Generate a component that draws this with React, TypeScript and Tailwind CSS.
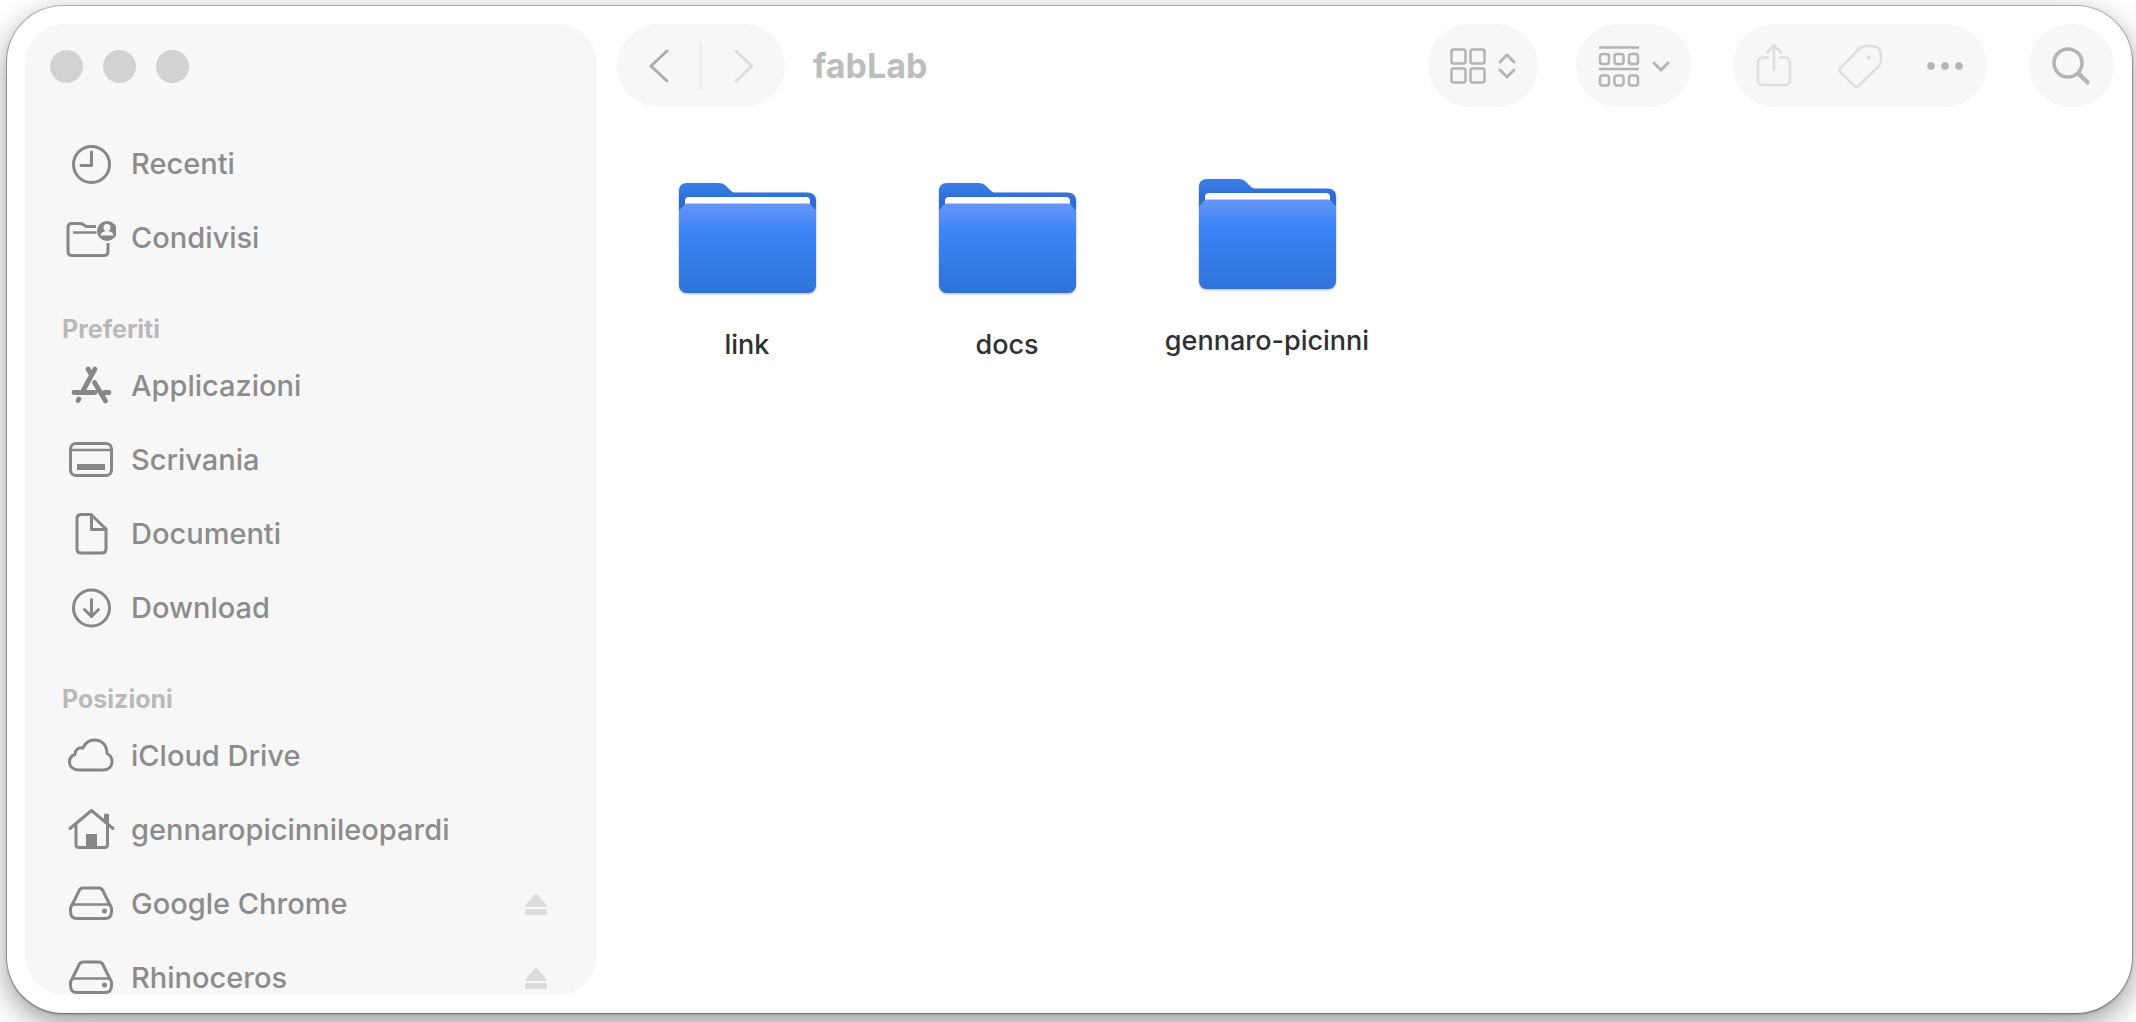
import React from "react";

const line = {
  fill: "none",
  stroke: "currentColor",
  strokeWidth: 3,
  strokeLinecap: "round" as const,
  strokeLinejoin: "round" as const,
};

function SideIcon({ children }: { children: React.ReactNode }) {
  return (
    <svg viewBox="0 0 50 48" className="h-12 w-[50px] shrink-0 text-[#878787]" aria-hidden="true" {...line}>
      {children}
    </svg>
  );
}

const ClockIcon = () => (
  <SideIcon>
    <circle cx="25.500" cy="24.500" r="18" />
    <path d="M25.500 12v13.500H15" />
  </SideIcon>
);

const SharedIcon = () => (
  <SideIcon>
    <path d="M30 12.500H20.500c-2 0-3-3-6-3H6C3.500 9.500 2 11 2 13.500v24c0 2.500 1.500 4 4 4h32c2.500 0 4-1.500 4-4V29" strokeLinecap="butt" />
    <path d="M7 18.500h23.500" strokeWidth="2.500" strokeLinecap="butt" />
    <circle cx="41" cy="17" r="10" fill="currentColor" stroke="none" />
    <circle cx="41" cy="13.500" r="3.500" fill="#f7f7f7" stroke="none" />
    <path d="M34.500 21.500c.5-3 2.500-4.500 6.500-4.500s6 1.500 6.500 4.500z" fill="#f7f7f7" stroke="none" />
  </SideIcon>
);

const AppsIcon = () => (
  <SideIcon>
    <g strokeWidth="4.800">
      <path d="M22 7l3 5M29 7L17.500 28M8 30.500h21M12 38.500l1-1.500M28.500 20.500l11 18.500M38.500 30.500h4.500" />
    </g>
  </SideIcon>
);

const DesktopIcon = () => (
  <SideIcon>
    <rect x="4.500" y="7.500" width="41" height="32" rx="5.500" />
    <path d="M4.500 14h41" strokeWidth="2.500" />
    <path d="M11 28h28v6H11z" fill="currentColor" stroke="none" />
  </SideIcon>
);

const DocumentIcon = () => (
  <SideIcon>
    <path d="M15.500 4.500h9.500L40 19v20c0 2.500-1.500 4-4 4H15c-2.500 0-4-1.500-4-4V8.500c0-2.500 1.500-4 4.500-4z" />
    <path d="M25.500 5v14.500H40" />
  </SideIcon>
);

const DownloadIcon = () => (
  <SideIcon>
    <circle cx="25.500" cy="24" r="18" />
    <path d="M25.500 15.500V32M18.500 25.500l7 7 7-7" />
  </SideIcon>
);

const CloudIcon = () => (
  <SideIcon>
    <path d="M12.500 38C7 38 3.500 34.500 3.500 30c0-4 2-6.500 5.500-7.500 0-4.500 3.500-7.500 8-6.500 2-4.500 6-8 11.500-8C36 8 41 13.500 41 21.500c3 1.500 5 4.500 5 8 0 5-3.500 8.500-9 8.500z" />
  </SideIcon>
);

const HouseIcon = () => (
  <SideIcon>
    <path d="M4 22.500L25.500 4.500 47 22.500M10 19v19.500c0 2 1 3 3 3h25.500c2 0 3-1 3-3V9M39.500 9v6" />
    <path d="M20 28h11v13.500H20z" fill="currentColor" stroke="none" />
  </SideIcon>
);

const DriveIcon = () => (
  <SideIcon>
    <path d="M12.500 12c.7-2.500 2-4 5-4h15c3 0 4.300 1.500 5 4l8 16v3.500c0 4.500-2.500 7-6.500 7H11c-4 0-6.500-2.500-6.500-7V28z" />
    <path d="M6 24.500h38" strokeWidth="2.500" />
    <circle cx="38.500" cy="31" r="2.500" fill="currentColor" stroke="none" />
  </SideIcon>
);

type Entry = { label: string; Icon: () => React.ReactElement; eject?: boolean };

const sections: { title?: string; entries: Entry[] }[] = [
  {
    entries: [
      { label: "Recenti", Icon: ClockIcon },
      { label: "Condivisi", Icon: SharedIcon },
    ],
  },
  {
    title: "Preferiti",
    entries: [
      { label: "Applicazioni", Icon: AppsIcon },
      { label: "Scrivania", Icon: DesktopIcon },
      { label: "Documenti", Icon: DocumentIcon },
      { label: "Download", Icon: DownloadIcon },
    ],
  },
  {
    title: "Posizioni",
    entries: [
      { label: "iCloud Drive", Icon: CloudIcon },
      { label: "gennaropicinnileopardi", Icon: HouseIcon },
      { label: "Google Chrome", Icon: DriveIcon, eject: true },
      { label: "Rhinoceros", Icon: DriveIcon, eject: true },
    ],
  },
];

function Sidebar() {
  return (
    <aside className="flex w-[572px] shrink-0 flex-col overflow-hidden rounded-[40px] bg-[#f7f7f7]">
      <div className="flex h-[103px] shrink-0 gap-5 px-[25px] pt-[26px]">
        {["Chiudi", "Riduci", "Ingrandisci"].map((name) => (
          <button key={name} aria-label={name} className="size-[33px] rounded-full bg-[#d2d2d2]" />
        ))}
      </div>
      <nav className="flex flex-col">
        {sections.map((section, i) => (
          <section key={i}>
            {section.title && (
              <h2 className="flex h-[74px] items-end pl-[37px] text-[25px] leading-10 font-bold text-[#b9b9b9]">
                {section.title}
              </h2>
            )}
            <ul>
              {section.entries.map(({ label, Icon, eject }) => (
                <li key={label} className="flex h-[74px] items-center justify-between pr-[50px] pl-[41px]">
                  <button className="flex items-center gap-[15px] text-[29px] leading-9 font-medium text-[#8c8c8c]">
                    <Icon />
                    {label}
                  </button>
                  {eject && (
                    <button aria-label={`Espelli ${label}`}>
                      <svg viewBox="0 0 22 22" className="size-[22px] text-[#dcdcdc]" fill="currentColor">
                        <path d="M10 1.200q1-1 2 0l9.500 11q.8 1.800-1 1.800H1.500q-1.800 0-1-1.800z" />
                        <rect y="16" width="22" height="6" rx="1" />
                      </svg>
                    </button>
                  )}
                </li>
              ))}
            </ul>
          </section>
        ))}
      </nav>
    </aside>
  );
}

const pill = "flex h-[83px] shrink-0 items-center justify-center rounded-full bg-[#f7f7f7]";

function Toolbar() {
  return (
    <header className="flex items-center text-[#b4b4b4]">
      <div className={pill + " w-[168px]"}>
        <button aria-label="Indietro" className="flex h-full flex-1 items-center justify-center text-[#adadad]">
          <svg viewBox="0 0 24 36" className="h-9 w-6" {...line}>
            <path d="M20 3L4 18l16 15" />
          </svg>
        </button>
        <span className="h-[46px] w-0.5 bg-[#ececec]" />
        <button aria-label="Avanti" className="flex h-full flex-1 items-center justify-center text-[#dddddd]">
          <svg viewBox="0 0 24 36" className="h-9 w-6" {...line}>
            <path d="M4 3l16 15L4 33" />
          </svg>
        </button>
      </div>
      <h1 className="ml-7 flex-1 text-[34px] leading-10 font-bold text-[#bdbdbd]">fabLab</h1>
      <button aria-label="Vista icone" className={pill + " w-[110px] gap-3"}>
        <svg viewBox="0 0 36 36" className="size-9" {...line} strokeWidth={2.500}>
          <rect x="1.500" y="1.500" width="14" height="14" rx="2" />
          <rect x="20.500" y="1.500" width="14" height="14" rx="2" />
          <rect x="1.500" y="20.500" width="14" height="14" rx="2" />
          <rect x="20.500" y="20.500" width="14" height="14" rx="2" />
        </svg>
        <svg viewBox="0 0 18 28" className="h-7 w-[18px]" {...line}>
          <path d="M2 10l7-7 7 7M2 18l7 7 7-7" />
        </svg>
      </button>
      <button aria-label="Raggruppa" className={pill + " ml-[38px] w-[115px] gap-3"}>
        <svg viewBox="0 0 42 42" className="size-[42px]" {...line} strokeWidth={2.500}>
          <path d="M1 2.500h40M1 24h40" strokeLinecap="butt" />
          <rect x="2" y="9" width="9" height="10" rx="2.500" />
          <rect x="16.500" y="9" width="9" height="10" rx="2.500" />
          <rect x="31" y="9" width="9" height="10" rx="2.500" />
          <rect x="2" y="30.500" width="9" height="10" rx="2.500" />
          <rect x="16.500" y="30.500" width="9" height="10" rx="2.500" />
          <rect x="31" y="30.500" width="9" height="10" rx="2.500" />
        </svg>
        <svg viewBox="0 0 18 12" className="h-3 w-[18px]" {...line}>
          <path d="M2 3l7 7 7-7" />
        </svg>
      </button>
      <div className={pill + " ml-[42px] w-[254px]"}>
        <button aria-label="Condividi" className="flex h-full flex-1 items-center justify-center text-[#dedede]">
          <svg viewBox="0 0 44 44" className="size-11" {...line} strokeWidth={2.500}>
            <path d="M15 13.500H10c-3 0-5 2-5 5V36c0 3 2 5 5 5h22c3 0 5-2 5-5V18.500c0-3-2-5-5-5h-5M21 26V1.500M14 8.500l7-7 7 7" />
          </svg>
        </button>
        <button aria-label="Tag" className="flex h-full flex-1 items-center justify-center text-[#dedede]">
          <svg viewBox="0 0 44 44" className="size-11" {...line} strokeWidth={2.500}>
            <path d="M2.500 24c-1.300 1.300-1.300 2.800 0 4.200l14 13.600c1.400 1.300 2.800 1.300 4.200 0L40 23c2-2 3-4 3-7v-4.500C43 5.500 39.500 2 33 2h-5c-3 0-5 1-7 3z" />
            <circle cx="31" cy="13.500" r="2.200" fill="currentColor" stroke="none" />
          </svg>
        </button>
        <button aria-label="Altro" className="flex h-full flex-1 items-center justify-center">
          <svg viewBox="0 0 36 8" className="h-2 w-9" fill="currentColor">
            <circle cx="4" cy="4" r="3.800" />
            <circle cx="18" cy="4" r="3.800" />
            <circle cx="32" cy="4" r="3.800" />
          </svg>
        </button>
      </div>
      <button aria-label="Cerca" className={pill + " ml-[42px] w-[85px]"}>
        <svg viewBox="0 0 40 40" className="size-10" {...line} strokeWidth={3.500}>
          <circle cx="16" cy="17" r="14" />
          <path d="M27 28l8.500 8.500" strokeWidth="4.500" />
        </svg>
      </button>
    </header>
  );
}

function FolderIcon() {
  return (
    <svg viewBox="0 0 137 114" className="h-[114px] w-[137px] drop-shadow-[0_1px_1px_rgba(0,0,0,0.3)]" aria-hidden="true">
      <defs>
        <linearGradient id="folder-front" x1="0" y1="0" x2="0" y2="1">
          <stop offset="0" stopColor="#6895f6" />
          <stop offset=".3" stopColor="#3b85f7" />
          <stop offset="1" stopColor="#3072d8" />
        </linearGradient>
        <linearGradient id="folder-back" x1="0" y1="0" x2="0" y2="1">
          <stop offset="0" stopColor="#3a80e8" />
          <stop offset=".3" stopColor="#2c6cd4" />
        </linearGradient>
      </defs>
      <path d="M0 9c0-5 3-8 8-8h31c4 0 6 1 8 3l4 4c2 2 3 2.500 6 2.500h71c6 0 9 3 9 8V60H0z" fill="url(#folder-back)" />
      <path d="M6 19c0-3 1.500-4 4-4h117c2.500 0 4 1 4 4v10H6z" fill="#fff" />
      <path d="M0 28c3-1 4-6.500 8-6.500h121c4 0 5 5.500 8 6.500v75c0 4.500-3.500 8-8 8H8c-4.500 0-8-3.500-8-8z" fill="url(#folder-front)" />
    </svg>
  );
}

const folders = [
  { name: "link", place: "mt-1" },
  { name: "docs", place: "mt-1" },
  { name: "gennaro-picinni", place: "mt-0" },
];

export default function App() {
  return (
    <div className="flex h-screen overflow-hidden bg-white pt-1.5 pr-1 pb-[9px] pl-[7px] font-['Inter',sans-serif]">
      <div className="flex min-w-0 flex-1 gap-5 rounded-[56px] bg-white p-[18px] shadow-[0_0_0_1px_rgba(0,0,0,0.2),0_1px_3px_rgba(0,0,0,0.3),0_10px_30px_rgba(0,0,0,0.4)]">
        <Sidebar />
        <main className="flex min-w-0 flex-1 flex-col">
          <Toolbar />
          <ul className="flex flex-wrap items-start pt-[71px]">
            {folders.map(({ name, place }) => (
              <li key={name} className={"w-[260px] " + place}>
                <button className="flex w-full flex-col items-center gap-[33px] text-[27px] leading-8 font-medium text-[#303030]">
                  <FolderIcon />
                  {name}
                </button>
              </li>
            ))}
          </ul>
        </main>
      </div>
    </div>
  );
}
